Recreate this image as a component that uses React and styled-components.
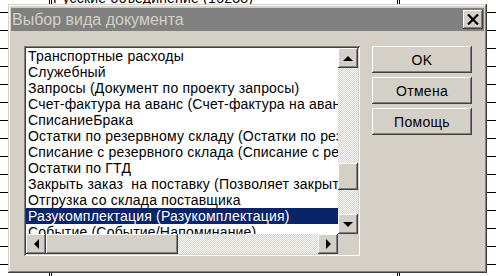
import React from "react";
import styled, { createGlobalStyle, css } from "styled-components";

const Global = createGlobalStyle`
  html, body { margin: 0; padding: 0; background: #fff; }
  body { font-family: "Liberation Sans", Arial, sans-serif; }
`;

const raised = css`
  box-shadow: inset -1px -1px #404040, inset 1px 1px #fff,
    inset -2px -2px #808080, inset 2px 2px #d4d0c8;
`;

const Page = styled.div`
  position: relative;
  width: 496px;
  height: 276px;
  overflow: hidden;
  background: #fff;
`;

const Strip = styled.div`
  position: absolute;
  top: 0;
  bottom: 0;
  ${(p) => (p.$side === "left" ? "left: 0; width: 8px;" : "right: 0; width: 9px;")}
  background: repeating-linear-gradient(
    to bottom,
    transparent 0 12px,
    #000 12px 13px,
    transparent 13px 18px
  );
  background-size: 100% 18px;
`;

const VLine = styled.div`
  position: absolute;
  top: 0;
  bottom: 0;
  left: ${(p) => p.$x}px;
  width: 3px;
  border-left: 1px solid #000;
  border-right: 1px solid #000;
  box-sizing: border-box;
`;

const BackText = styled.div`
  position: absolute;
  left: 53px;
  top: -10px;
  font-size: 14px;
  line-height: 16px;
  letter-spacing: 0.2px;
  color: #000;
  white-space: nowrap;
`;

const Dialog = styled.div`
  position: absolute;
  left: 8px;
  top: 4px;
  width: 479px;
  height: 269px;
  box-sizing: border-box;
  padding: 4px 3px 3px 3px;
  background: #d4d0c8;
  box-shadow: inset -1px -1px #404040, inset 1px 1px #d4d0c8,
    inset -2px -2px #808080, inset 2px 2px #fff;
  display: flex;
  flex-direction: column;
`;

const TitleBar = styled.div`
  height: 23px;
  background: #808080;
  display: flex;
  align-items: center;
  justify-content: space-between;
  padding: 0 1px 0 1px;
`;

const TitleText = styled.span`
  color: #d4d0c8;
  font-size: 16px;
  line-height: 18px;
  white-space: nowrap;
`;

const CloseBtn = styled.div`
  width: 20px;
  height: 19px;
  background: #d4d0c8;
  ${raised};
  display: flex;
  align-items: center;
  justify-content: center;
`;

const Body = styled.div`
  display: flex;
  align-items: flex-start;
  gap: 12px;
  padding: 15px 0 0 13px;
`;

const ListBox = styled.div`
  width: 336px;
  height: 210px;
  box-sizing: border-box;
  padding: 2px;
  background: #fff;
  box-shadow: inset 1px 1px #808080, inset -1px -1px #fff,
    inset 2px 2px #404040, inset -2px -2px #d4d0c8;
  display: grid;
  grid-template-columns: 312px 20px;
  grid-template-rows: 186px 20px;
`;

const Items = styled.div`
  overflow: hidden;
  background: #fff;
`;

const Item = styled.div`
  height: 16px;
  line-height: 16px;
  font-size: 14px;
  letter-spacing: 0.2px;
  padding-left: 2px;
  white-space: nowrap;
  color: ${(p) => (p.$selected ? "#fff" : "#000")};
  background: ${(p) => (p.$selected ? "#0a246a" : "transparent")};
`;

const checker = css`
  background: repeating-conic-gradient(#d4d0c8 0 25%, #fff 0 50%) 0 0 / 2px 2px;
`;

const VScroll = styled.div`
  display: flex;
  flex-direction: column;
  ${checker};
`;

const HScroll = styled.div`
  display: flex;
  ${checker};
`;

const ScrollBtn = styled.div`
  width: 20px;
  height: 20px;
  flex: none;
  background: #d4d0c8;
  ${raised};
  display: flex;
  align-items: center;
  justify-content: center;
`;

const Track = styled.div`
  flex: 1;
  position: relative;
`;

const VThumb = styled.div`
  position: absolute;
  left: 0;
  width: 20px;
  background: #d4d0c8;
  ${raised};
`;

const HThumb = styled.div`
  position: absolute;
  top: 0;
  height: 20px;
  background: #d4d0c8;
  ${raised};
`;

const Corner = styled.div`
  background: #d4d0c8;
`;

const Buttons = styled.div`
  display: flex;
  flex-direction: column;
  gap: 4px;
`;

const Button = styled.div`
  width: 100px;
  height: 27px;
  box-sizing: border-box;
  background: #d4d0c8;
  ${raised};
  display: flex;
  align-items: center;
  justify-content: center;
  font-size: 14px;
  letter-spacing: 0.3px;
  color: #000;
`;

const Arrow = ({ dir }) => {
  const pts = {
    up: "0,5 5,0 10,5",
    down: "0,0 10,0 5,5",
    left: "5,0 5,10 0,5",
    right: "0,0 0,10 5,5",
  }[dir];
  const vertical = dir === "up" || dir === "down";
  return (
    <svg width={vertical ? 10 : 5} height={vertical ? 5 : 10} viewBox={vertical ? "0 0 10 5" : "0 0 5 10"}>
      <polygon points={pts} fill="#000" />
    </svg>
  );
};

const items = [
  "Транспортные расходы",
  "Служебный",
  "Запросы (Документ по проекту запросы)",
  "Счет-фактура на аванс (Счет-фактура на аванс)",
  "СписаниеБрака",
  "Остатки по резервному складу (Остатки по резервному складу)",
  "Списание с резервного склада (Списание с резервного склада)",
  "Остатки по ГТД",
  "Закрыть заказ  на поставку (Позволяет закрыть заказ)",
  "Отгрузка со склада поставщика",
  "Разукомплектация (Разукомплектация)",
  "Событие (Событие/Напоминание)",
];

export default function App() {
  return (
    <Page>
      <Global />
      <Strip $side="left" />
      <Strip $side="right" />
      <VLine $x={49} />
      <VLine $x={397} />
      <BackText>Русские объединение (1б238)</BackText>
      <Dialog>
        <TitleBar>
          <TitleText>Выбор вида документа</TitleText>
          <CloseBtn>
            <svg width="12" height="11" viewBox="0 0 12 11">
              <path d="M1 0.5 L11 10.5 M11 0.5 L1 10.5" stroke="#000" strokeWidth="2.2" />
            </svg>
          </CloseBtn>
        </TitleBar>
        <Body>
          <ListBox>
            <Items>
              {items.map((t) => (
                <Item key={t} $selected={t.startsWith("Разукомплектация")}>
                  {t.replace(/  /g, "\u00a0 ")}
                </Item>
              ))}
            </Items>
            <VScroll>
              <ScrollBtn><Arrow dir="up" /></ScrollBtn>
              <Track>
                <VThumb style={{ top: 95, height: 27 }} />
              </Track>
              <ScrollBtn><Arrow dir="down" /></ScrollBtn>
            </VScroll>
            <HScroll>
              <ScrollBtn><Arrow dir="left" /></ScrollBtn>
              <Track>
                <HThumb style={{ left: 0, width: 132 }} />
              </Track>
              <ScrollBtn><Arrow dir="right" /></ScrollBtn>
            </HScroll>
            <Corner />
          </ListBox>
          <Buttons>
            <Button>OK</Button>
            <Button>Отмена</Button>
            <Button>Помощь</Button>
          </Buttons>
        </Body>
      </Dialog>
    </Page>
  );
}
